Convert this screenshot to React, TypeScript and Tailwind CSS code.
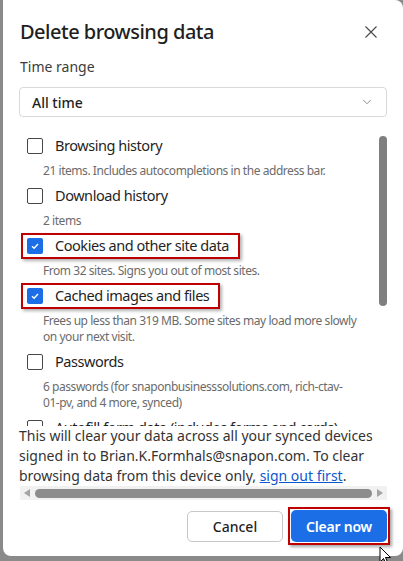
import { ChevronDown } from "lucide-react";

type Item = {
  label: string;
  desc: string;
  checked?: boolean;
  marked?: boolean;
};

const items: Item[] = [
  { label: "Browsing history", desc: "21 items. Includes autocompletions in the address bar." },
  { label: "Download history", desc: "2 items" },
  { label: "Cookies and other site data", desc: "From 32 sites. Signs you out of most sites.", checked: true, marked: true },
  {
    label: "Cached images and files",
    desc: "Frees up less than 319 MB. Some sites may load more slowly on your next visit.",
    checked: true,
    marked: true,
  },
  {
    label: "Passwords",
    desc: "6 passwords (for snaponbusinesssolutions.com, rich-ctav-\n01-pv, and 4 more, synced)",
  },
  { label: "Autofill form data (includes forms and cards)", desc: "" },
];

function Checkbox({ checked }: { checked?: boolean }) {
  if (checked) {
    return (
      <span className="flex h-[16px] w-[16px] shrink-0 items-center justify-center rounded-[2px] bg-[#1b6ee6]">
        <svg width="10" height="10" viewBox="0 0 10 10">
          <path d="M2 5.2 L4.1 7.2 L8 3" fill="none" stroke="white" strokeWidth="1.4" />
        </svg>
      </span>
    );
  }
  return <span className="h-[16px] w-[16px] shrink-0 rounded-[2px] border-[1.5px] border-[#474747]" />;
}

function Row({ item }: { item: Item }) {
  const row = (
    <div className="flex h-[22px] items-center gap-[12px]">
      <Checkbox checked={item.checked} />
      <span className="whitespace-nowrap text-[14.5px] tracking-[-0.45px] text-[#1f1f1f]">{item.label}</span>
    </div>
  );
  return (
    <div className="mb-[6px]">
      {item.marked ? (
        <div className="-mx-[6px] -my-[2px] flex w-fit border-2 border-[#c00000] pl-[4px] pr-[9px] shadow-[2px_2px_3px_rgba(0,0,0,0.3)]">
          {row}
        </div>
      ) : (
        row
      )}
      {item.desc && (
        <p className="mt-[6px] whitespace-pre-line pl-[16px] pr-[19px] text-[12px] leading-[16px] tracking-[-0.45px] text-[#6b6b6b]">
          {item.desc}
        </p>
      )}
    </div>
  );
}

export default function App() {
  return (
    <div className="relative h-[561px] w-[403px] overflow-hidden bg-[#8a8a8a] font-['Noto_Sans',sans-serif]">
      <div className="ml-[3px] flex h-[556px] w-[400px] flex-col rounded-tr-[8px] rounded-b-[8px] bg-white">
        <div className="flex items-center justify-between pl-[17px] pr-[26px] pt-[18px]">
          <h1 className="text-[20px] font-medium leading-[28px] tracking-[-0.5px] text-[#1f1f1f]">
            Delete browsing data
          </h1>
          <svg width="12" height="12" viewBox="0 0 12 12">
            <path d="M0.5 0.5 L11.5 11.5 M11.5 0.5 L0.5 11.5" stroke="#474747" strokeWidth="1.1" />
          </svg>
        </div>

        <div className="mt-[11px] pl-[17px] text-[14px] leading-[20px] text-[#3c3c3c]">Time range</div>

        <div className="ml-[16px] mt-[10px] flex h-[30px] w-[368px] items-center justify-between rounded-[4px] border border-[#dadada] pl-[12px] pr-[12px]">
          <span className="text-[14px] font-medium text-[#1f1f1f]">All time</span>
          <ChevronDown size={14} strokeWidth={1.3} className="text-[#6b6b6b]" />
        </div>

        <div className="mt-[8px] flex h-[301px]">
          <div className="flex-1 overflow-hidden pl-[24px] pt-[10px]">
            {items.map((item) => (
              <Row key={item.label} item={item} />
            ))}
          </div>
          <div className="mr-[16px] mt-[11px] h-[170px] w-[8px] rounded-full bg-[#7f7f7f]" />
        </div>

        <p className="pl-[16px] pr-[12px] text-[14px] leading-[20px] text-[#333]">
          This will clear your data across all your synced devices signed in to Brian.K.Formhals@snapon.com. To clear
          browsing data from this device only, <span className="text-[#0b57d0] underline">sign out first</span>.
        </p>

        <div className="ml-[17px] flex h-[14px] w-[367px] items-center gap-[5px] bg-[#f1f1f1] px-[4px]">
          <svg width="6" height="8" viewBox="0 0 6 8">
            <path d="M6 0 L0 4 L6 8 Z" fill="#a3a3a3" />
          </svg>
          <div className="h-[9px] flex-1 rounded-full bg-[#8c8c8c]" />
          <svg width="6" height="8" viewBox="0 0 6 8">
            <path d="M0 0 L6 4 L0 8 Z" fill="#a3a3a3" />
          </svg>
        </div>

        <div className="mt-[7px] flex items-center justify-end gap-[5px] pr-[13px]">
          <button className="h-[31px] w-[96px] rounded-[5px] border border-[#c7c7c7] text-[14px] font-medium text-[#1f1f1f]">
            Cancel
          </button>
          <div className="border-2 border-[#c00000] p-[1px] shadow-[2px_2px_3px_rgba(0,0,0,0.35)]">
            <button className="h-[32px] w-[96px] rounded-[5px] bg-[#1b6ee6] text-[14px] font-semibold tracking-[-0.2px] text-white">
              Clear now
            </button>
          </div>
        </div>
      </div>

      <svg className="absolute left-[379px] top-[546px]" width="14" height="20" viewBox="0 0 14 20">
        <path d="M1 1 L1 16 L4.5 12.5 L7 18 L9 17 L6.5 11.5 L11.5 11.5 Z" fill="white" stroke="black" strokeWidth="1" />
      </svg>
    </div>
  );
}
